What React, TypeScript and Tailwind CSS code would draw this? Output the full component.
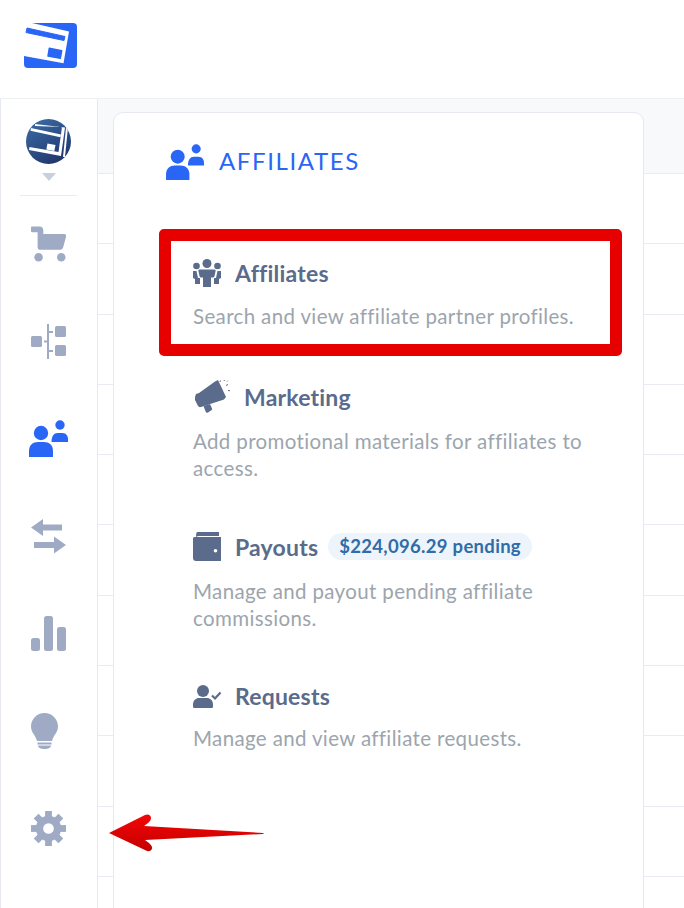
import React from "react";

const slate = "#5a6b8c";
const muted = "#9fabc4";

const PeopleIcon = ({ className }: { className: string }) => (
  <svg viewBox="0 0 39 37" className={className} fill="#2a66f6">
    <circle cx="12" cy="13" r="7.2" />
    <path d="M0 37v-6c0-6 4-9 9-9h6c5 0 9 3 9 9v6z" />
    <circle cx="31" cy="5" r="4.7" />
    <path d="M22.500 22c0-6 2.500-9 6-9h5c3.500 0 5.500 3 5.500 6v3z" />
  </svg>
);

const CartIcon = () => (
  <svg viewBox="0 0 37 37" className="h-[36px] w-[35px]" fill={muted}>
    <path d="M0 1a1 1 0 0 1 1-1h8c3 0 4 2 4 4v4h22c1.500 0 2.500 1 2 3l-3 11c-.5 1.500-1.500 2.500-3 2.500H9c-1 0-2-1-2-2.500V6H1a1 1 0 0 1-1-1z" />
    <circle cx="8" cy="32.500" r="4.500" />
    <circle cx="32" cy="32.500" r="4.500" />
  </svg>
);

const TreeIcon = () => (
  <svg viewBox="0 0 35 35" className="h-[35px] w-[35px]" fill={muted}>
    <rect x="0" y="12" width="11" height="11" rx="1.500" />
    <rect x="24" y="2" width="11" height="11" rx="1.500" />
    <rect x="24" y="21" width="11" height="11" rx="1.500" />
    <rect x="16" y="0" width="2" height="35" />
    <rect x="13" y="16.500" width="4" height="2" />
    <rect x="17" y="7" width="5" height="2" />
    <rect x="17" y="26" width="5" height="2" />
  </svg>
);

const ArrowsIcon = () => (
  <svg viewBox="0 0 35 35" className="h-[35px] w-[35px]" fill={muted}>
    <path d="M0 8.500 12 0v5.500h19v6H12V17z" />
    <path d="M35 26 23 17.500V23H3v6h20v5.500z" />
  </svg>
);

const ChartIcon = () => (
  <svg viewBox="0 0 35 35" className="h-[35px] w-[35px]" fill={muted}>
    <rect x="0" y="22" width="9" height="13" rx="2.500" />
    <rect x="13" y="0" width="9" height="35" rx="2.500" />
    <rect x="26" y="11" width="9" height="24" rx="2.500" />
  </svg>
);

const BulbIcon = () => (
  <svg viewBox="0 0 27 36" className="h-[36px] w-[27px]" fill={muted}>
    <path d="M13.500 0C6 0 0 6 0 13.500c0 6 4.500 8.500 6 14.500h15c1.500-6 6-8.500 6-14.500C27 6 21 0 13.500 0z" />
    <rect x="6.500" y="29.500" width="14" height="2" />
    <path d="M7 32.500h13c0 2-2.500 3.500-6.500 3.500S7 34.500 7 32.500z" />
  </svg>
);

const GearIcon = () => (
  <svg viewBox="0 0 36 36" className="h-[35px] w-[35px]" fill={muted}>
    {[0, 45, 90, 135, 180, 225, 270, 315].map((deg) => (
      <rect key={deg} x="14.500" y="0" width="7" height="8" transform={`rotate(${deg} 18 18)`} />
    ))}
    <path
      fillRule="evenodd"
      d="M18 5a13 13 0 1 0 0 26 13 13 0 0 0 0-26zm0 7.500a5.500 5.500 0 1 1 0 11 5.500 5.500 0 0 1 0-11z"
    />
  </svg>
);

const GroupIcon = () => (
  <svg viewBox="0 0 28 28" className="h-[28px] w-[28px]" fill={slate}>
    <circle cx="3.500" cy="7" r="3.300" />
    <circle cx="14" cy="4.500" r="4.500" />
    <circle cx="24.500" cy="7" r="3.300" />
    <path d="M6.500 10.500h15c1 0 1.500 1 1 2l-1 4.500c-.3 1-1 1.500-2 1.500H18V28h-8v-9.500H8.500c-1 0-1.700-.5-2-1.500l-1-4.500c-.5-1 0-2 1-2z" />
    <path d="M0 12h3.500l1.500 7h2v6H2v-5l-2-1z" />
    <path d="M28 12h-3.500L23 19h-2v6h5v-5l2-1z" />
  </svg>
);

const MegaphoneIcon = () => (
  <svg viewBox="0 0 35 33" className="h-[33px] w-[35px]" fill={slate}>
    <path d="M0 17l1-3 3-1L20 1.500 23 0l8 17-2 2.500-20 6.500-3 1c-1.500.5-3-.5-3.500-2L0 20z" />
    <path d="M8.500 26l6.500-2 2 4.500c.3 1 0 1.500-1 2l-3 2c-1 .4-1.800.2-2.300-.8z" />
    <path d="M29 1l.6-1.200M31 5.500l2-1M33 10.500l2 .3" stroke={slate} strokeWidth="1" fill="none" />
    <path d="M25 2l.4-1.500M32 1.500l.8-.8" stroke={slate} strokeWidth="1" fill="none" />
  </svg>
);

const WalletIcon = () => (
  <svg viewBox="0 0 28 29" className="h-[29px] w-[28px]" fill={slate}>
    <path d="M4 0h22v4H6C4 4 3 5 3 5.500 3 5 3 1 4 0z" />
    <path fillRule="evenodd" d="M3 5h25v24H3c-1.700 0-3-1.300-3-3V7c0-2 1-2 3-2zm19.500 12a1.800 1.800 0 1 0 0 3.600 1.800 1.800 0 0 0 0-3.600z" />
  </svg>
);

const UserCheckIcon = () => (
  <svg viewBox="0 0 29 23" className="h-[23px] w-[29px]" fill={slate}>
    <circle cx="10" cy="6" r="6" />
    <path d="M0 20c0-5 3-7 6-7h8c3 0 6 2 6 7v1.500c0 1-.7 1.500-1.500 1.500h-17C.7 23 0 22.500 0 21.500z" />
    <path d="M19 10.500l3 3 5.500-6" fill="none" stroke={slate} strokeWidth="2.200" />
  </svg>
);

const Logo = () => (
  <svg viewBox="0 0 53 45" className="h-[45px] w-[53px]">
    <rect width="53" height="45" rx="4" fill="#2a66f6" />
    <path d="M0 0h8l37 8.500-5.500 31.800L0 33z" fill="#fff" />
    <path d="M3 5l38 8.500-1 4L2 9.500z" fill="#2a66f6" stroke="#2a66f6" strokeLinejoin="round" />
    <path d="M25.300 25.300l12.400 2.400-1.400 7.600L24 33z" fill="#2a66f6" stroke="#2a66f6" strokeWidth="1.500" strokeLinejoin="round" />
  </svg>
);

const Avatar = () => (
  <svg viewBox="0 0 45 45" className="h-[45px] w-[45px]">
    <defs>
      <linearGradient id="avatarFill" x1="0" y1="0" x2="0.6" y2="1">
        <stop offset="0" stopColor="#3d6fa8" />
        <stop offset="1" stopColor="#22386f" />
      </linearGradient>
      <clipPath id="avatarClip">
        <circle cx="22.500" cy="22.500" r="22.500" />
      </clipPath>
    </defs>
    <g clipPath="url(#avatarClip)">
      <rect width="45" height="45" fill="url(#avatarFill)" />
      <path d="M5 9l30 6.500-.6 2.800-30-6.500z" fill="#fff" />
      <path d="M9 5l30 3.500-4 28.500-32-6 .5-3 29 5 3.500-25-27-1z" fill="#fff" />
      <path d="M21.500 24.500l8 1.500-1.200 6-8-1.500z" fill="#fff" />
      <path d="M40 9l2-1-3 30-2 0z" fill="#fff" />
    </g>
  </svg>
);

const RedArrow = () => (
  <svg viewBox="0 0 160 44" className="absolute left-[106px] top-[811px] h-[44px] w-[160px]">
    <defs>
      <linearGradient id="arrowFill" x1="0" y1="0" x2="0" y2="1">
        <stop offset="0" stopColor="#f40606" />
        <stop offset="1" stopColor="#c40000" />
      </linearGradient>
    </defs>
    <path
      d="M3 22 39 4c3-1.500 6 0 6 3 0 2-1 3-3 5l-4 3 119 7c1 0 1 .8 0 1l-118 6 4 3c2 2 3.500 3.500 3 5.500-.5 2.500-3.500 3.500-6 2z"
      fill="url(#arrowFill)"
    />
  </svg>
);

const navIcons = [
  <CartIcon key="cart" />,
  <TreeIcon key="tree" />,
  <PeopleIcon key="people" className="h-[37px] w-[39px]" />,
  <ArrowsIcon key="arrows" />,
  <ChartIcon key="chart" />,
  <div key="bulb" className="-translate-x-[4px]"><BulbIcon /></div>,
  <GearIcon key="gear" />,
];

const Title = ({ children }: { children: React.ReactNode }) => (
  <span className="text-[23px] font-bold leading-[28px] tracking-[0.2px] text-[#5a6b8c]">{children}</span>
);

const Desc = ({ children }: { children: React.ReactNode }) => (
  <p className="text-[20.500px] leading-[27px] tracking-[0.36px] text-[#9ca5ad]">{children}</p>
);

export default function App() {
  return (
    <div className="relative h-[908px] w-[684px] overflow-hidden bg-white font-['Lato',sans-serif]">
      <header className="flex h-[99px] items-start border-b border-[#eef0f4] pl-[24px] pt-[23px]">
        <Logo />
      </header>

      <div className="flex h-[809px]">
        <aside className="flex w-[98px] shrink-0 flex-col items-center border-x border-x-[#e6e9f0] pr-[1px] pt-[20px]">
          <Avatar />
          <div className="mt-[9px] h-0 w-0 border-x-[7px] border-t-[8px] border-x-transparent border-t-[#c9d0dc]" />
          <div className="mt-[14px] h-px w-[57px] bg-[#e8ebf0]" />
          <nav className="mt-[-1px] flex flex-col items-center">
            {navIcons.map((icon, i) => (
              <div key={i} className="flex h-[97.500px] items-center justify-center">
                {icon}
              </div>
            ))}
          </nav>
        </aside>

        <main className="relative flex-1">
          <div className="h-[75px] border-b border-[#e8ebf2] bg-[#f7f9fb]" />
          {Array.from({ length: 10 }).map((_, i) => (
            <div key={i} className="h-[70.300px] border-b border-[#e8ebf2] first:h-[71px]" />
          ))}

          <section className="absolute left-[15px] top-[13px] h-[810px] w-[531px] rounded-t-[10px] border border-[#e6e9f0] bg-white pl-[45px]">
            <div className="flex items-center pl-[6px] pt-[31px]">
              <PeopleIcon className="h-[36px] w-[40px]" />
              <h2 className="mb-[2px] ml-[14px] text-[24px] leading-[30px] tracking-[1.600px] text-[#2a66f6]">AFFILIATES</h2>
            </div>

            <div className="mt-[49px] h-[127px] w-[463px] rounded-[5px] border-[12px] border-[#e60000] pl-[22px] pt-[18px]">
              <div className="flex items-center gap-[14px]">
                <GroupIcon />
                <Title>Affiliates</Title>
              </div>
              <div className="mt-[16px]">
                <Desc>Search and view affiliate partner profiles.</Desc>
              </div>
            </div>

            <div className="mt-[24px] w-[430px] pl-[34px]">
              <div className="flex h-[33px] items-center gap-[14px] pl-[2px]">
                <MegaphoneIcon />
                <Title>Marketing</Title>
              </div>
              <div className="mt-[15px]">
                <Desc>Add promotional materials for affiliates to access.</Desc>
              </div>
            </div>

            <div className="mt-[50px] w-[430px] pl-[34px]">
              <div className="flex h-[29px] items-center gap-[14px]">
                <WalletIcon />
                <Title>Payouts</Title>
                <span className="-ml-[4px] whitespace-nowrap rounded-full bg-[#edf4fb] px-[11px] text-[18.500px] font-bold leading-[27px] tracking-[0.3px] text-[#2f6ca8]">
                  $224,096.29 pending
                </span>
              </div>
              <div className="mt-[17px]">
                <Desc>Manage and payout pending affiliate commissions.</Desc>
              </div>
            </div>

            <div className="mt-[50px] w-[430px] pl-[34px]">
              <div className="flex h-[28px] items-center gap-[13px]">
                <UserCheckIcon />
                <Title>Requests</Title>
              </div>
              <div className="mt-[15px]">
                <Desc>Manage and view affiliate requests.</Desc>
              </div>
            </div>
          </section>
        </main>
      </div>

      <RedArrow />
    </div>
  );
}
